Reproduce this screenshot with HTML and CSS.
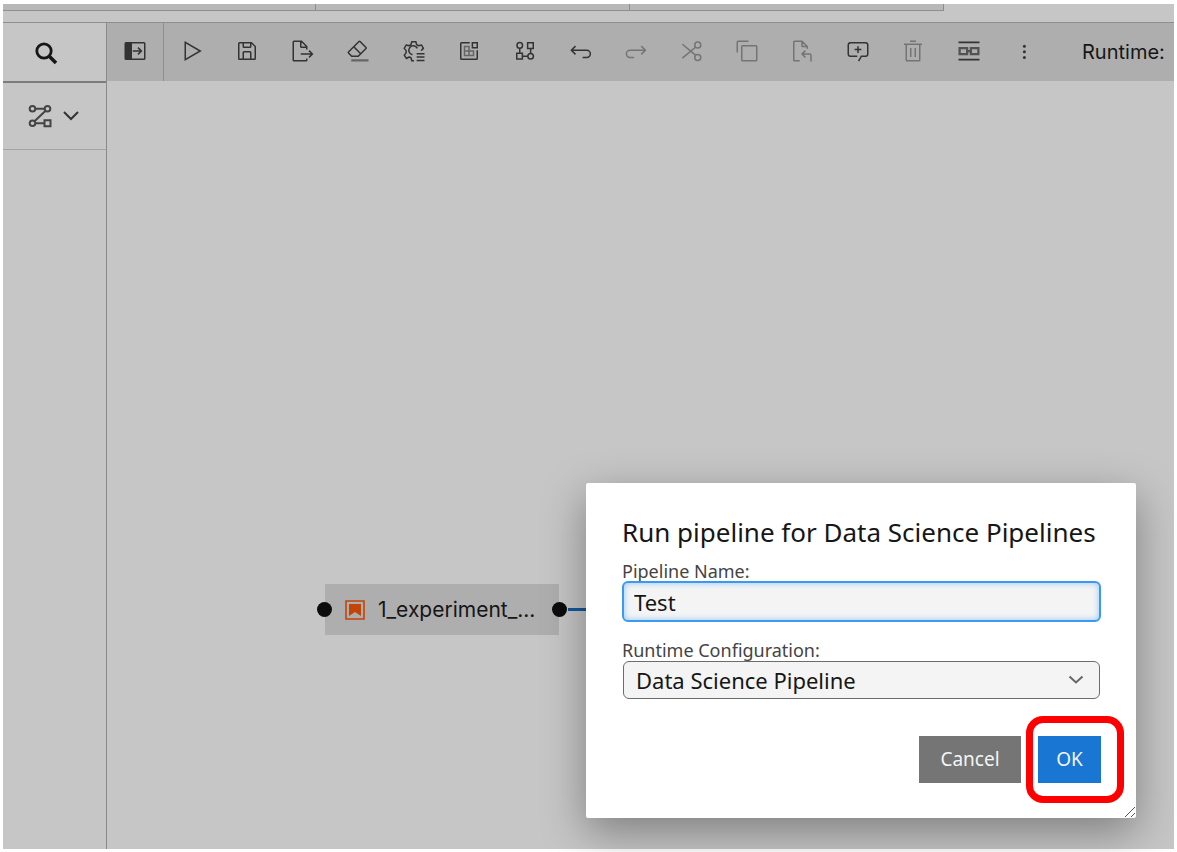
FILE: index.html
```html
<!DOCTYPE html>
<html lang="en">
<head>
<meta charset="utf-8">
<title>Pipeline editor</title>
<link rel="stylesheet" href="styles.css">
</head>
<body>
<div class="app">
  <div class="tabs">
    <div class="tab"></div>
    <div class="tab"></div>
    <div class="tab"></div>
  </div>
  <div class="editor">
    <aside class="palette">
      <button class="search" aria-label="Search">
        <svg class="icon" viewBox="0 0 24 24"><circle cx="10" cy="10" r="7.2" stroke-width="2.8"/><path d="M15.500 15.500 22 22" stroke-width="3.6"/></svg>
      </button>
      <button class="category" aria-label="Pipeline nodes">
        <svg class="icon nodes-icon" viewBox="0 0 24 24"><circle cx="4.500" cy="4.700" r="2.800"/><circle cx="19.500" cy="4.700" r="2.800"/><circle cx="4.500" cy="19.300" r="2.800"/><path d="M7.300 4.700h9.400M17.600 6.700 6.500 17.300M7.300 19.300h9M16.500 16.300h6v6h-6z"/></svg>
        <svg class="chevron" viewBox="0 0 16 10"><path d="m1 1 7 7 7-7"/></svg>
      </button>
    </aside>
    <main class="main">
      <div class="toolbar">
        <button class="toggle" aria-label="Open palette"><svg class="icon" viewBox="0 0 32 32"><rect x="3" y="5" width="26" height="22" rx="1"/><path class="solid" d="M3 5h9v22H3z"/><path d="M13 16h11M20 11.500l4.500 4.500-4.500 4.500"/></svg></button>
        <div class="tools">
          <button aria-label="Run"><svg class="icon" viewBox="0 0 32 32"><path d="M7 4.500v23L27 16z"/></svg></button>
          <button aria-label="Save"><svg class="icon" viewBox="0 0 32 32"><path class="solid" d="M27.710 9.290l-5-5A1 1 0 0 0 22 4H6a2 2 0 0 0-2 2v20a2 2 0 0 0 2 2h20a2 2 0 0 0 2-2V10a1 1 0 0 0-.290-.710zM12 6h8v4h-8zm8 20h-8v-8h8zm2 0v-8a2 2 0 0 0-2-2h-8a2 2 0 0 0-2 2v8H6V6h4v4a2 2 0 0 0 2 2h8a2 2 0 0 0 2-2V6.410l4 4V26z"/></svg></button>
          <button aria-label="Export"><svg class="icon" viewBox="0 0 32 32"><path d="M21 14v-4l-7-7H4a1 1 0 0 0-1 1v24a1 1 0 0 0 1 1h16a1 1 0 0 0 1-1v-2M13 3v7a1 1 0 0 0 1 1h7M13 20h15.500M24 15.500l4.500 4.500-4.500 4.500"/></svg></button>
          <button aria-label="Clear"><svg class="icon" viewBox="0 0 32 32"><path class="solid soft" d="M7 27h23v3H7z"/><path class="solid" d="M27.380 10.510 19.450 2.590a2 2 0 0 0-2.830 0l-14 14a2 2 0 0 0 0 2.830L7.130 24h9.590L27.380 13.340a2 2 0 0 0 0-2.830zM15.890 22H8l-4-4 6.310-6.310 7.930 7.920zm3.760-3.760-7.920-7.930L18 4l8 7.930z"/></svg></button>
          <button aria-label="Open runtimes"><svg class="icon" viewBox="0 0 32 32"><path d="M16 29h-3l-1-4-2.500-1-3.500 2-3-4.500 2.500-3v-3L3 12.500 5.500 8l4 1L12 7.500 13 3.500h5.500l1 4L22 9l4-1 2.500 4.500-3 3M20.500 12.500A6 6 0 1 0 14 21M19.500 19.500H30M19.500 24H30M19.500 28.500H30" stroke-linejoin="round"/></svg></button>
          <button aria-label="Open runtime images"><svg class="icon" viewBox="0 0 32 32"><path d="M17 5H6a1 1 0 0 0-1 1v20a1 1 0 0 0 1 1h20a1 1 0 0 0 1-1V15M20.500 5H27v6.500h-6.500z"/><g class="soft"><path d="M10 10h6v12h-6zM10 16h12v6H10z"/></g></svg></button>
          <button aria-label="Open component catalogs"><svg class="icon" viewBox="0 0 32 32"><circle cx="9" cy="8.500" r="3.700"/><path d="M19.500 5H27v7.500h-7.500zM5 19h7.500v7.500H5zM9 12.500V19M23.500 12.500V19M12.500 23h7"/><circle cx="23.500" cy="23" r="3.700"/></svg></button>
          <button aria-label="Undo"><svg class="icon" viewBox="0 0 32 32"><path d="M4.500 15H25a4.800 4.800 0 0 1 0 9.600h-5.500M10 9.500 4.500 15l5.500 5.500"/></svg></button>
          <button disabled aria-label="Redo"><svg class="icon" viewBox="0 0 32 32"><path d="M28.500 15H8a4.800 4.800 0 0 0 0 9.600h5.500M23 9.500l5.500 5.500-5.500 5.500"/></svg></button>
          <button disabled aria-label="Cut"><svg class="icon" viewBox="0 0 32 32"><circle cx="25" cy="8" r="4"/><circle cx="25" cy="24.500" r="4"/><path d="M4.500 7 22 21.500M4.500 25.500 22 11"/></svg></button>
          <button disabled aria-label="Copy"><svg class="icon" viewBox="0 0 32 32"><rect x="9" y="9" width="20" height="20" rx="1"/><path d="M3 18V4a1 1 0 0 1 1-1h14"/></svg></button>
          <button disabled aria-label="Paste"><svg class="icon" viewBox="0 0 32 32"><path d="M13 29H6a1 1 0 0 1-1-1V4a1 1 0 0 1 1-1h10l7 7v3M16 3v6a1 1 0 0 0 1 1h6M28 30v-8a2 2 0 0 0-2-2H16M20.500 15.500 16 20l4.500 4.500"/></svg></button>
          <button aria-label="Add comment"><svg class="icon" viewBox="0 0 32 32"><path d="M15 23H6a3 3 0 0 1-3-3V8a3 3 0 0 1 3-3h20a3 3 0 0 1 3 3v12a3 3 0 0 1-3 3h-5.500l-3.700 6.500M16 9.500v9M11.500 14h9"/></svg></button>
          <button disabled aria-label="Delete"><svg class="icon" viewBox="0 0 32 32"><path d="M4 7h24M12 3h8M7 7v21a1 1 0 0 0 1 1h16a1 1 0 0 0 1-1V7M13 12v12M19 12v12"/></svg></button>
          <button aria-label="Arrange"><svg class="icon" viewBox="0 0 32 32"><path d="M2 4.500h28M2 27.500h28" stroke-width="2.500"/><path class="medium" d="M3.500 12h10v8h-10zM18.500 12h10v8h-10zM13 16h6" stroke-width="3"/></svg></button>
          <button aria-label="More"><svg class="icon" viewBox="0 0 32 32"><g class="solid"><circle cx="16.500" cy="9.500" r="2"/><circle cx="16.500" cy="17" r="2"/><circle cx="16.500" cy="24.500" r="2"/></g></svg></button>
        </div>
        <div class="runtime">Runtime:</div>
      </div>
      <div class="canvas">
        <div class="link"></div>
        <div class="node">
          <span class="port port-in"></span>
          <svg class="node-icon" viewBox="0 0 20 20"><path d="M1 1h18v18H1z" stroke-width="1.600"/><path class="solid" d="M4 4h12v12l-6-4-6 4z"/></svg>
          <span>1_experiment_...</span>
          <span class="port port-out"></span>
        </div>
        <form class="dialog">
          <h1>Run pipeline for Data Science Pipelines</h1>
          <label for="name">Pipeline Name:</label>
          <input id="name" type="text" value="Test">
          <label for="config">Runtime Configuration:</label>
          <div class="select">
            <select id="config"><option>Data Science Pipeline</option></select>
            <svg class="arrow" viewBox="0 0 16 10"><path d="m1.500 1.500 6.500 6 6.500-6"/></svg>
          </div>
          <div class="actions">
            <button type="button" class="cancel">Cancel</button>
            <button type="button" class="ok">OK</button>
          </div>
          <svg class="grip" viewBox="0 0 12 12"><path d="M1 11 11 1M7 11l4-4"/></svg>
        </form>
      </div>
    </main>
  </div>
</div>
</body>
</html>
```
FILE: styles.css
```css
* { box-sizing: border-box; }

body {
  margin: 0;
  background: #fff;
  color: #161616;
  font-family: "Noto Sans", "Liberation Sans", sans-serif;
}

button {
  border: 0;
  padding: 0;
  background: none;
  color: #333;
  font: inherit;
}

svg { display: block; fill: none; stroke: currentColor; }

.app {
  display: flex;
  flex-direction: column;
  min-height: 100vh;
  padding: 4px 3px 3px;
}

.tabs {
  display: flex;
  height: 18px;
  padding-bottom: 11px;
  background: #c6c6c6;
}

.tab {
  flex: 0 1 314px;
  background: #b8b8b8;
  border-right: 1px solid #8e8e8e;
  border-bottom: 1px solid #8e8e8e;
}

.tab:first-child { flex-basis: 313px; }

.editor {
  display: flex;
  flex: 1;
  border-top: 1px solid #8e8e8e;
  background: #c6c6c6;
}

.palette {
  display: flex;
  flex-direction: column;
  flex: 0 0 104px;
  border-right: 1px solid #8a8a8a;
}

.search {
  display: grid;
  place-items: center;
  height: 60px;
  padding: 2px 17px 0 0;
  border-bottom: 2px solid #7c7c7c;
  color: #161616;
}

.category {
  display: flex;
  align-items: center;
  gap: 11px;
  height: 67px;
  padding-left: 25px;
  border-bottom: 1px solid #a4a4a4;
}

.icon { width: 24px; height: 24px; stroke-width: 2; }
.nodes-icon { color: #444; }
.chevron { width: 16px; height: 10px; stroke-width: 2; }
.solid { fill: currentColor; stroke: none; }
.soft { opacity: 0.6; }
.medium { opacity: 0.75; }

.main {
  display: flex;
  flex: 1;
  flex-direction: column;
  min-width: 0;
}

.toolbar {
  display: flex;
  height: 58px;
  overflow: hidden;
  background: #aeaeae;
}

.toggle {
  display: grid;
  place-items: center;
  flex: 0 0 57px;
  border-right: 1px solid #8e8e8e;
  padding-bottom: 2px;
}

.tools { display: flex; flex: 0 1 888px; }

.tools button {
  display: grid;
  flex: 1;
  place-items: center;
  padding-bottom: 2px;
}

.tools button:disabled { color: #747474; }

.runtime {
  align-self: center;
  padding-left: 30px;
  font-family: Inter, sans-serif;
  font-size: 20px;
  white-space: nowrap;
}

.canvas { position: relative; flex: 1; }

.node {
  position: absolute;
  left: 218px;
  top: 503px;
  display: flex;
  align-items: center;
  gap: 13px;
  width: 234px;
  height: 51px;
  padding-left: 20px;
  background: #aeaeae;
  font-family: Inter, sans-serif;
  font-size: 21px;
}

.node-icon { width: 20px; height: 20px; color: #c34407; }

.port {
  position: absolute;
  top: 18px;
  width: 15px;
  height: 15px;
  border-radius: 50%;
  background: #0c0c0c;
}

.port-in { left: -8px; }
.port-out { right: -8px; }

.link {
  position: absolute;
  left: 461px;
  top: 527px;
  width: 60px;
  height: 3px;
  background: #14589e;
}

.dialog {
  position: absolute;
  left: 479px;
  top: 402px;
  display: flex;
  flex-direction: column;
  width: 550px;
  padding: 32px 35px 35px 36px;
  border-radius: 2px;
  background: #fff;
  box-shadow: 0 14px 44px rgba(0, 0, 0, 0.36);
}

.dialog h1 {
  margin: 0;
  font-size: 26px;
  font-weight: 400;
  line-height: 34px;
  white-space: nowrap;
}

.dialog label {
  padding-top: 12px;
  color: #444;
  font-size: 18px;
  line-height: 20px;
}

.dialog input,
.dialog select {
  width: 100%;
  background: #f4f4f4;
  color: #161616;
  font: inherit;
  font-size: 22px;
}

.dialog input {
  height: 41px;
  margin-bottom: 6px;
  padding: 0 10px;
  border: 2px solid #3a9af0;
  border-radius: 6px;
  outline: 0;
  box-shadow: inset 0 0 6px #90c4f8;
}

.select { position: relative; padding: 1px 1px 0; }

.dialog select {
  display: block;
  height: 38px;
  padding: 0 12px;
  border: 1px solid #6c6c6c;
  border-radius: 6px;
  appearance: none;
}

.arrow {
  position: absolute;
  right: 17px;
  top: 15px;
  width: 16px;
  height: 10px;
  color: #666;
  stroke-width: 2;
}

.actions {
  display: flex;
  justify-content: flex-end;
  gap: 17px;
  padding-top: 37px;
}

.actions button {
  height: 47px;
  padding-bottom: 2px;
  color: #f4f4f4;
  font-size: 19px;
}

.actions .cancel { width: 102px; background: #757575; }
.actions .ok { position: relative; width: 63px; background: #1976d2; }

.ok::after {
  position: absolute;
  inset: -20px -23px -20px -12px;
  border: 7px solid #f00;
  border-radius: 17px;
  content: "";
}

.grip {
  position: absolute;
  right: 0;
  bottom: 0;
  width: 12px;
  height: 12px;
  color: #555;
}
```
